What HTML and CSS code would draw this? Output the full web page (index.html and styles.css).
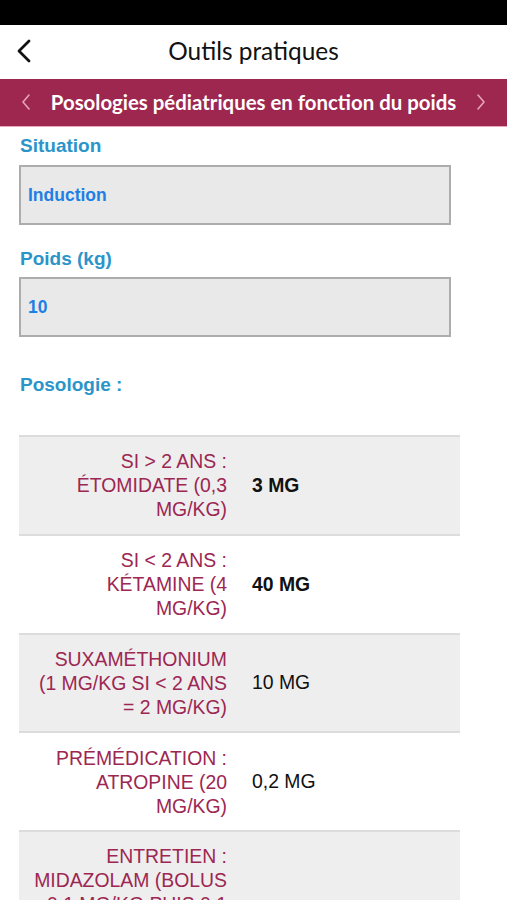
FILE: index.html
```html
<!DOCTYPE html>
<html lang="fr">
<head>
<meta charset="utf-8">
<title>Outils pratiques</title>
<link rel="stylesheet" href="styles.css">
</head>
<body>
<div class="status"></div>
<header class="nav">
  <svg class="back" width="18" height="26" viewBox="0 0 18 26"><path d="M14 3 L4 13 L14 23" fill="none" stroke="#111" stroke-width="2.8" stroke-linecap="round" stroke-linejoin="round"/></svg>
  <h1 class="nav-title">Outils pratiques</h1>
</header>
<div class="band">
  <svg class="chev" width="12" height="20" viewBox="0 0 12 20"><path d="M9 3 L3 10 L9 17" fill="none" stroke="#e8a3bb" stroke-width="1.6" stroke-linecap="round" stroke-linejoin="round"/></svg>
  <div class="band-title">Posologies pédiatriques en fonction du poids</div>
  <svg class="chev" width="12" height="20" viewBox="0 0 12 20"><path d="M3 3 L9 10 L3 17" fill="none" stroke="#e8a3bb" stroke-width="1.6" stroke-linecap="round" stroke-linejoin="round"/></svg>
</div>
<main class="content">
  <div class="label first">Situation</div>
  <div class="field">Induction</div>
  <div class="label second">Poids (kg)</div>
  <div class="field">10</div>
  <div class="label third">Posologie :</div>
  <div class="table">
    <div class="row shade">
      <div class="name">SI &gt; 2 ANS :<br>ÉTOMIDATE (0,3<br>MG/KG)</div>
      <div class="dose strong">3 MG</div>
    </div>
    <div class="row">
      <div class="name">SI &lt; 2 ANS :<br>KÉTAMINE (4<br>MG/KG)</div>
      <div class="dose strong">40 MG</div>
    </div>
    <div class="row shade">
      <div class="name">SUXAMÉTHONIUM<br>(1 MG/KG SI &lt; 2 ANS<br>= 2 MG/KG)</div>
      <div class="dose">10 MG</div>
    </div>
    <div class="row">
      <div class="name">PRÉMÉDICATION :<br>ATROPINE (20<br>MG/KG)</div>
      <div class="dose">0,2 MG</div>
    </div>
    <div class="row shade">
      <div class="name">ENTRETIEN :<br>MIDAZOLAM (BOLUS<br>0,1 MG/KG PUIS 0,1<br>MG/KG/H) OU<br>PROPOFOL (2 À 4<br>MG/KG/H)</div>
      <div class="dose">1 MG</div>
    </div>
  </div>
</main>
</body>
</html>
```

FILE: styles.css
```css
* { box-sizing: border-box; }
html, body { margin: 0; padding: 0; background: #fff; }
body { width: 507px; height: 900px; overflow: hidden; font-family: "Liberation Sans", Arial, sans-serif; }

.status { height: 25px; background: #000; }

.nav {
  height: 54px;
  display: flex;
  align-items: center;
  justify-content: center;
  position: relative;
  background: #fff;
}
.back { position: absolute; left: 15px; top: 13px; }
.nav-title {
  margin: 0 0 2px 0;
  font-family: Lato, "Noto Sans", sans-serif;
  font-weight: 400;
  font-size: 24.4px;
  line-height: 28px;
  color: #111;
}

.band {
  height: 48px;
  background: #9e2750;
  border-bottom: 1px solid #e6a6bb;
  display: flex;
  align-items: center;
  justify-content: space-between;
  padding: 0 20px 1px 20px;
}
.band-title {
  font-family: Lato, "Noto Sans", sans-serif;
  font-weight: 700;
  font-size: 20.4px;
  color: #fff;
  white-space: nowrap;
}

.content { padding-left: 19px; }

.label {
  font-weight: 700;
  font-size: 19px;
  line-height: 22px;
  color: #2b95c9;
  padding-left: 1px;
  margin-bottom: 8px;
}
.label.first { margin-top: 8px; }
.label.second { margin-top: 23px; margin-bottom: 7px; }
.label.third { margin-top: 37px; margin-bottom: 0; }

.field {
  width: 432px;
  height: 60px;
  background: #e9e9e9;
  border: 2px solid #adadad;
  display: flex;
  align-items: center;
  padding-left: 7px;
  font-weight: 700;
  font-size: 17.5px;
  color: #1e7fe4;
}

.table { margin-top: 39px; width: 441px; }
.row {
  display: flex;
  align-items: center;
  border-top: 2px solid #dcdcdc;
  min-height: 98.75px;
  background: #fff;
}
.row.shade { background: #eeeeee; }
.name {
  width: 218px;
  flex: none;
  padding: 12px 10px 12px 10px;
  text-align: right;
  white-space: nowrap;
  color: #9c2752;
  font-size: 19.4px;
  line-height: 24px;
}
.dose {
  padding-left: 15px;
  font-size: 19.4px;
  color: #111;
}
.dose.strong { font-weight: 700; }
```
